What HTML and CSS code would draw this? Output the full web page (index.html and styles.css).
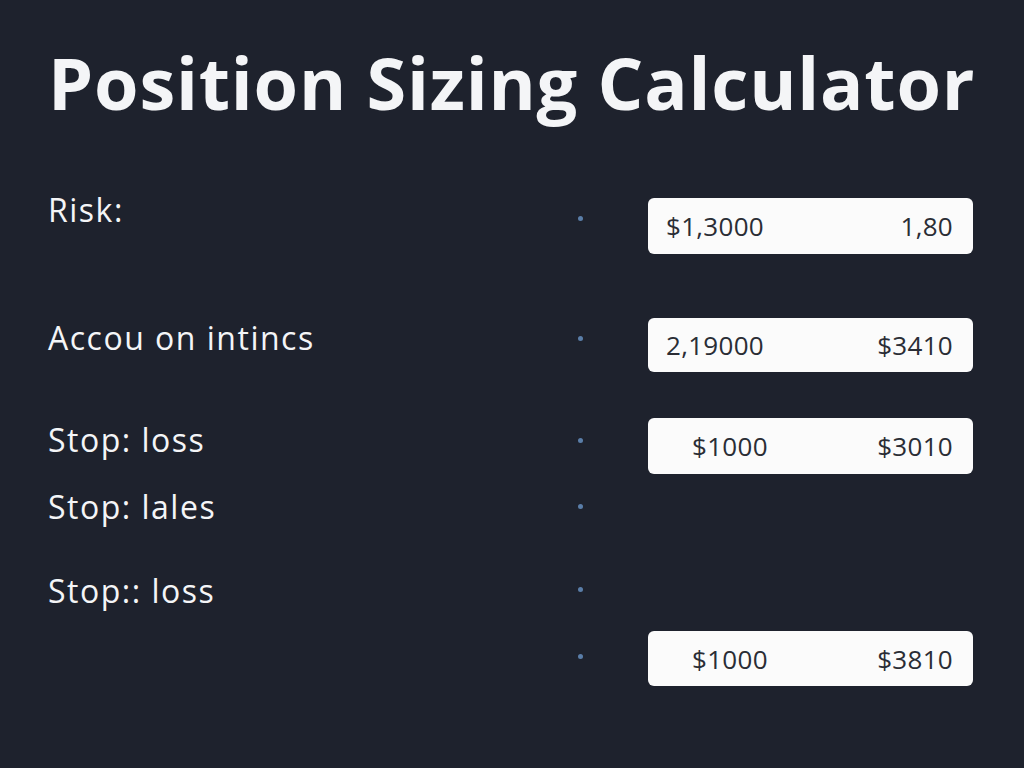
FILE: index.html
```html
<!DOCTYPE html>
<html lang="en">
<head>
    <meta charset="UTF-8">
    <meta name="viewport" content="width=device-width, initial-scale=1.0">
    <title>Position Sizing Calculator</title>
    <link rel="stylesheet" href="styles.css">
</head>
<body>
    <div class="page">
        <h1>Position Sizing Calculator</h1>

        <div class="rows">
            <div class="row row-first">
                <span class="label">Risk:</span>
                <span class="dot"></span>
                <div class="field">
                    <span>$1,3000</span>
                    <span>1,80</span>
                </div>
            </div>

            <div class="row row-second">
                <span class="label">Accou on intincs</span>
                <span class="dot"></span>
                <div class="field">
                    <span>2,19000</span>
                    <span>$3410</span>
                </div>
            </div>

            <div class="row row-third">
                <span class="label">Stop: loss</span>
                <span class="dot"></span>
                <div class="field field-inset">
                    <span>$1000</span>
                    <span>$3010</span>
                </div>
            </div>

            <div class="row row-fourth">
                <span class="label">Stop: lales</span>
                <span class="dot"></span>
            </div>

            <div class="row row-fifth">
                <span class="label">Stop:: loss</span>
                <span class="dot"></span>
            </div>

            <div class="row row-sixth">
                <span class="label"></span>
                <span class="dot"></span>
                <div class="field field-inset">
                    <span>$1000</span>
                    <span>$3810</span>
                </div>
            </div>
        </div>
    </div>
</body>
</html>
```

FILE: styles.css
```css
body {
    margin: 0;
    padding: 0;
    background: #1e222d;
    color: #f4f5f7;
    font-family: "Open Sans", "Liberation Sans", sans-serif;
    height: 768px;
    overflow: hidden;
}

.page {
    padding: 40px 51px 0 48px;
}

h1 {
    margin: 0;
    font-size: 72px;
    line-height: 84px;
    font-weight: 700;
    letter-spacing: 0.8px;
    white-space: nowrap;
}

.rows {
    margin-top: 68px;
}

.row {
    display: grid;
    grid-template-columns: 530px 70px 325px;
    align-items: center;
    height: 56px;
}

.label {
    font-size: 32px;
    line-height: 36px;
    font-weight: 400;
    letter-spacing: 1.5px;
    white-space: nowrap;
}

.dot {
    width: 5px;
    height: 5px;
    border-radius: 50%;
    background: #5a7ea8;
}

.field {
    display: flex;
    justify-content: space-between;
    align-items: center;
    height: 56px;
    padding: 0 20px 0 18px;
    background: #fbfbfb;
    border-radius: 6px;
    color: #2a2d35;
    font-size: 26px;
    letter-spacing: 0.3px;
    box-sizing: border-box;
}

.field-inset {
    padding-left: 44px;
}

/* vertical nudges to follow the picture */
.row-first { height: 62px; }
.row-first .label { align-self: start; }
.row-first .dot { align-self: start; margin-top: 24px; }
.row-first .field { align-self: end; }

.row-second { margin-top: 64px; height: 54px; }
.row-second .field { height: 54px; }
.row-second .label,
.row-second .dot { margin-bottom: 14px; }

.row-third { margin-top: 46px; }
.row-third .label,
.row-third .dot { margin-bottom: 12px; }

.row-fourth { margin-top: 5px; }
.row-fourth .dot { margin-bottom: 2px; }

.row-fifth { margin-top: 27px; }
.row-fifth .label { margin-top: 2px; }
.row-fifth .dot { margin-bottom: 2px; }

.row-sixth { margin-top: 13px; height: 55px; }
.row-sixth .field { height: 55px; }
.row-sixth .dot { margin-bottom: 4px; }
```
